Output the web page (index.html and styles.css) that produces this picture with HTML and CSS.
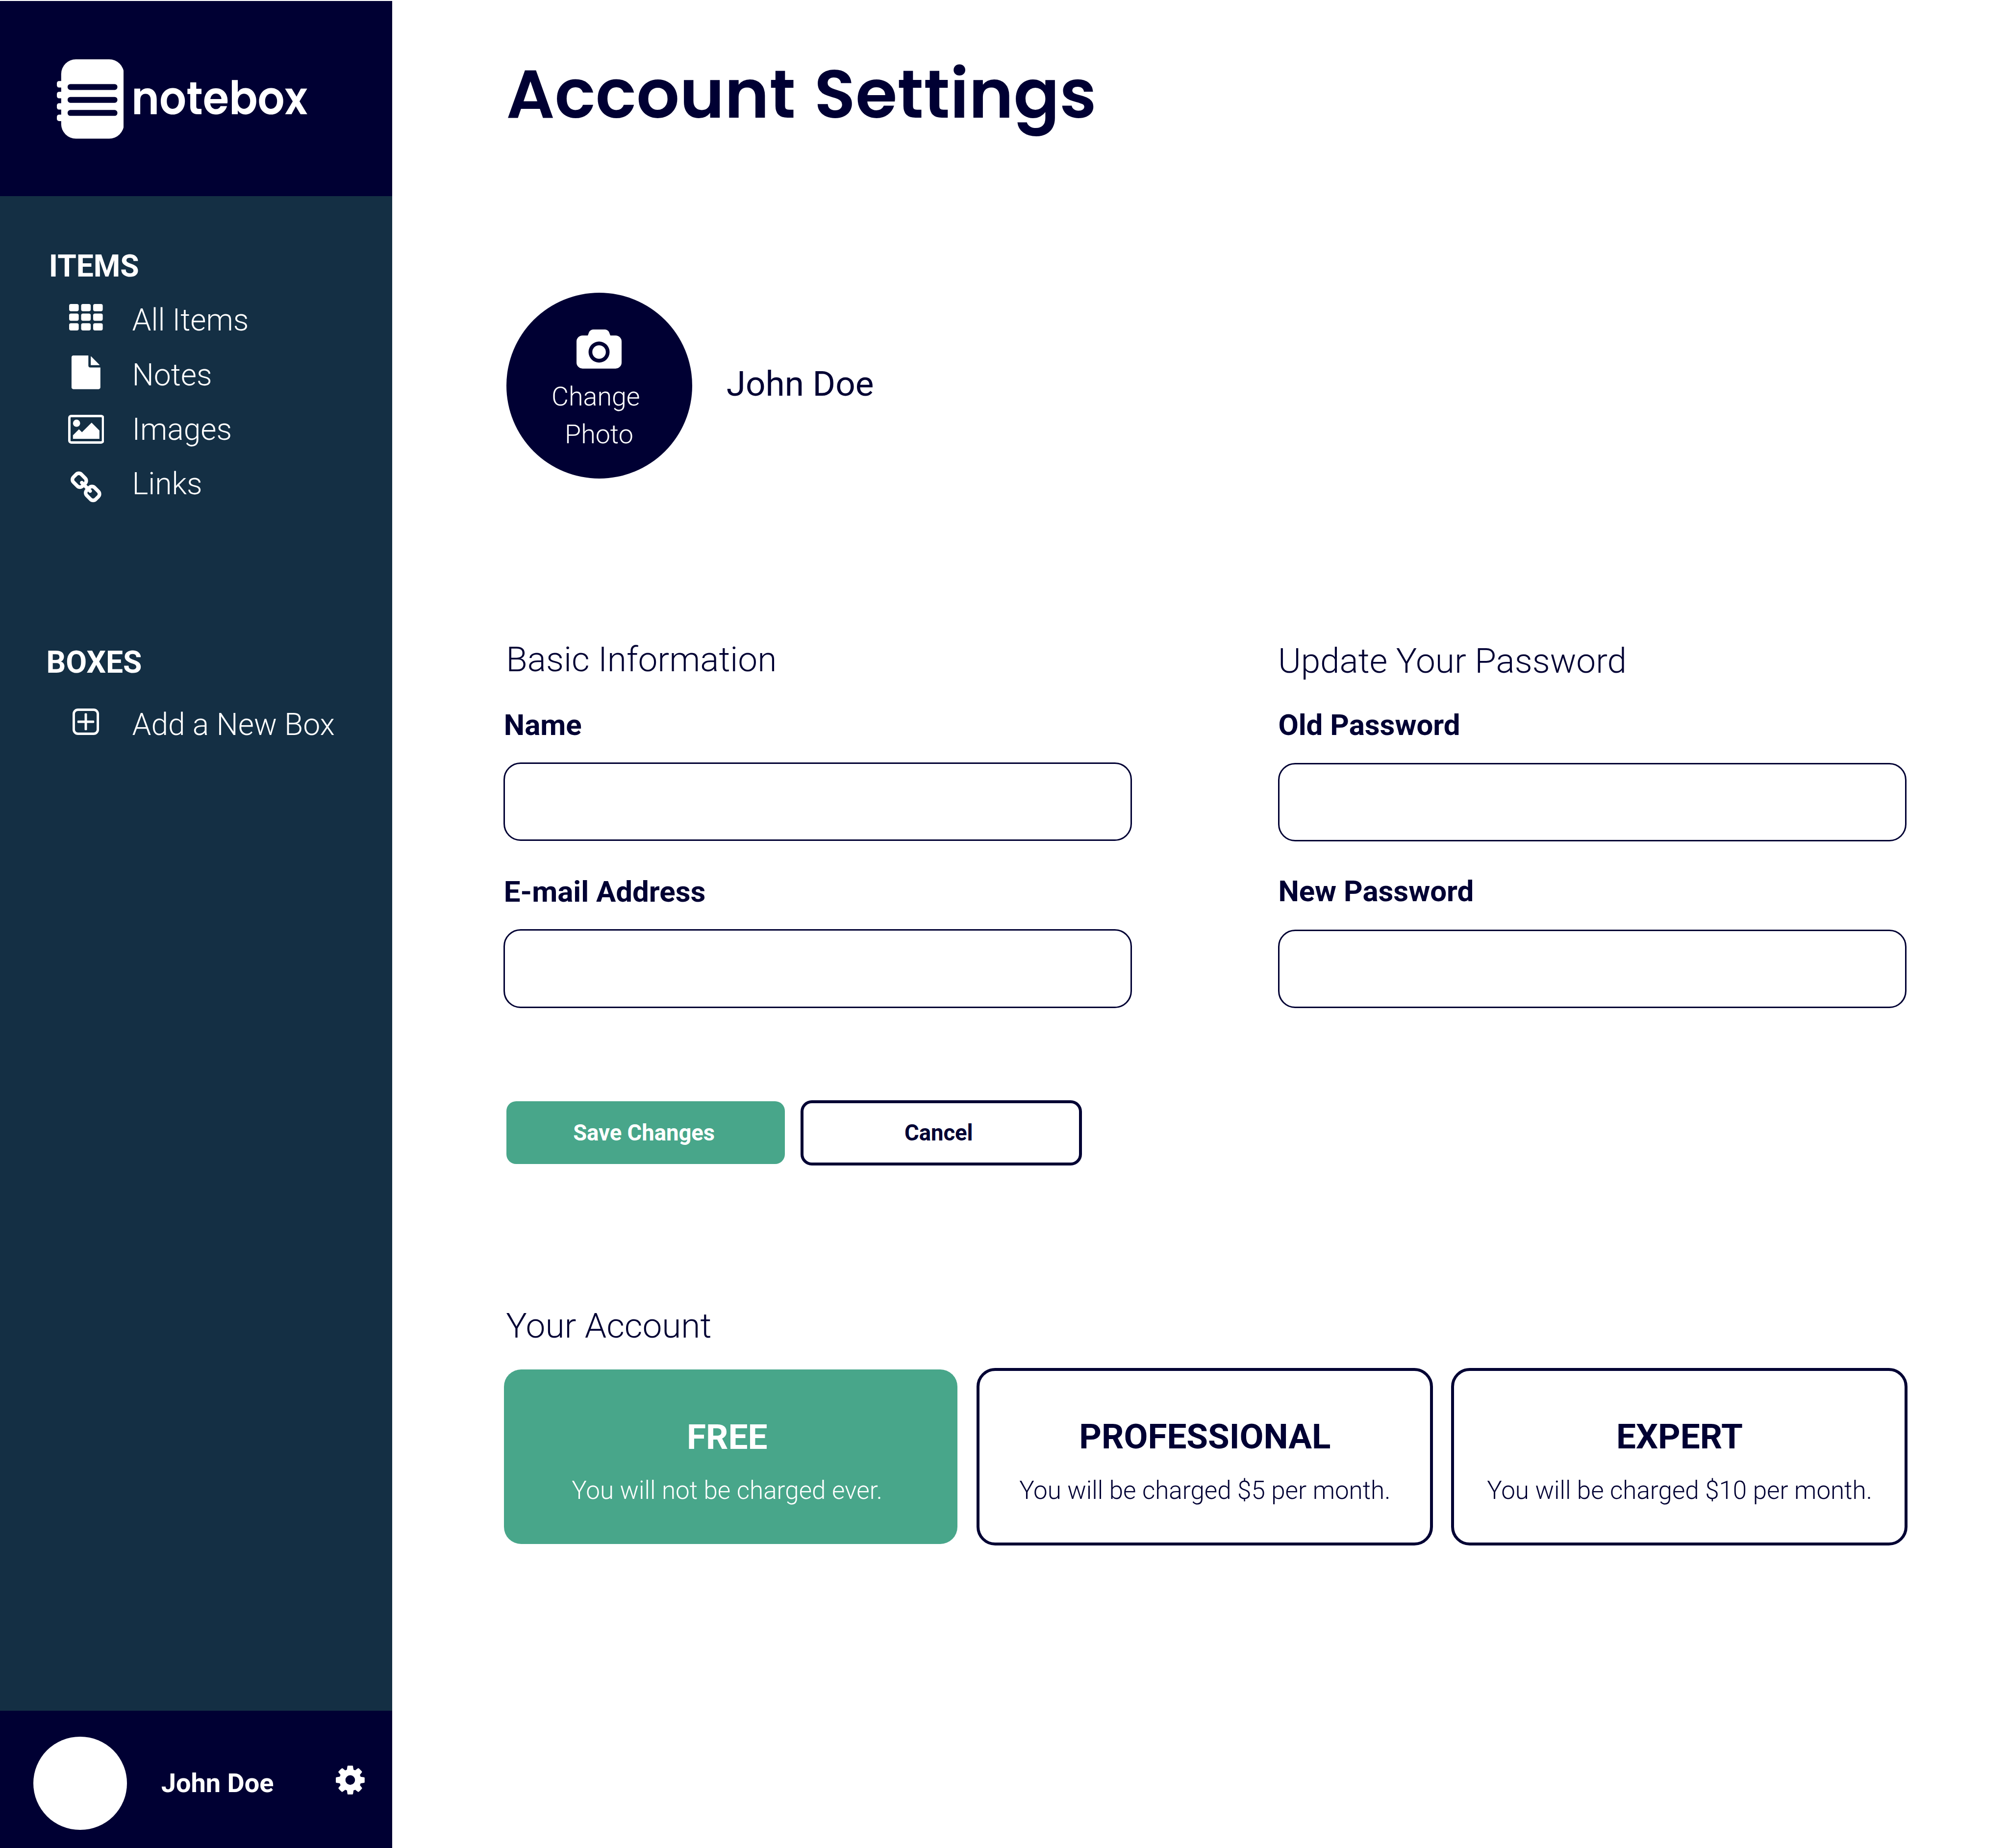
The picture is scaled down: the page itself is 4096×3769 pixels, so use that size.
FILE: index.html
```
<!DOCTYPE html>
<html lang="en">
<head>
<meta charset="utf-8">
<title>Notebox – Account Settings</title>
<link rel="stylesheet" href="styles.css">
</head>
<body>
<div class="app">
  <aside class="sidebar">
    <header class="brand">
      <svg class="brand-mark" viewBox="115.5 120.9 136.8 161.8" aria-hidden="true">
        <g fill="#fff">
          <rect x="124.3" y="120.9" width="128" height="161.8" rx="30"/>
          <rect x="115.5" y="165.2" width="18" height="13.2" rx="4.5"/>
          <rect x="115.5" y="187.2" width="18" height="13.2" rx="4.5"/>
          <rect x="115.5" y="210.3" width="18" height="13.2" rx="4.5"/>
          <rect x="115.5" y="233.6" width="18" height="13.2" rx="4.5"/>
        </g>
        <g fill="#000033">
          <rect x="137.4" y="171.3" width="101.6" height="12" rx="5.6"/>
          <rect x="137.4" y="197.6" width="101.6" height="12" rx="5.6"/>
          <rect x="137.4" y="224.2" width="101.6" height="12" rx="5.6"/>
        </g>
      </svg>
      <span class="brand-name">notebox</span>
    </header>

    <nav class="nav">
      <h2 class="nav-title">ITEMS</h2>
      <ul class="nav-list">
        <li class="nav-item">
          <span class="nav-icon nav-icon-grid"><svg width="68.6" height="53.9" viewBox="0 0 1792 1408"><g fill="#fff">
            <rect x="0" y="0" width="512" height="384" rx="96"/><rect x="640" y="0" width="512" height="384" rx="96"/><rect x="1280" y="0" width="512" height="384" rx="96"/>
            <rect x="0" y="512" width="512" height="384" rx="96"/><rect x="640" y="512" width="512" height="384" rx="96"/><rect x="1280" y="512" width="512" height="384" rx="96"/>
            <rect x="0" y="1024" width="512" height="384" rx="96"/><rect x="640" y="1024" width="512" height="384" rx="96"/><rect x="1280" y="1024" width="512" height="384" rx="96"/>
          </g></svg></span>
          <span>All Items</span>
        </li>
        <li class="nav-item">
          <span class="nav-icon nav-icon-file"><svg width="68.7" height="68.7" viewBox="0 0 1792 1792"><path fill="#fff" d="M1152 512v-472q22 14 36 28l408 408q14 14 28 36h-472zm-128 32q0 40 28 68t68 28h544v1056q0 40-28 68t-68 28h-1344q-40 0-68-28t-28-68v-1600q0-40 28-68t68-28h800v544z"/></svg></span>
          <span>Notes</span>
        </li>
        <li class="nav-item">
          <span class="nav-icon nav-icon-image"><svg width="73.6" height="58.9" viewBox="-64 128 1920 1536"><path fill="#fff" d="M576 576q0 80-56 136t-136 56-136-56-56-136 56-136 136-56 136 56 56 136zm1024 384v448h-1408v-192l320-320 160 160 512-512zm96-704h-1600q-13 0-22.5 9.5t-9.5 22.5v1216q0 13 9.5 22.5t22.5 9.5h1600q13 0 22.5-9.5t9.5-22.5v-1216q0-13-9.5-22.5t-22.5-9.5zm160 32v1216q0 66-47 113t-113 47h-1600q-66 0-113-47t-47-113v-1216q0-66 47-113t113-47h1600q66 0 113 47t47 113z"/></svg></span>
          <span>Images</span>
        </li>
        <li class="nav-item">
          <span class="nav-icon nav-icon-link"><svg width="68.7" height="68.7" viewBox="0 0 1792 1792"><path fill="#fff" d="M1520 1216q0-40-28-68l-208-208q-28-28-68-28-42 0-72 32 3 3 19 18.5t21.5 21.5 15 19 13 25.5 3.5 27.5q0 40-28 68t-68 28q-15 0-27.5-3.5t-25.5-13-19-15-21.5-21.5-18.5-19q-33 31-33 73 0 40 28 68l206 207q27 27 68 27 40 0 68-26l147-146q28-28 28-67zm-703-705q0-40-28-68l-206-207q-28-28-68-28-39 0-68 27l-147 146q-28 28-28 67 0 40 28 68l208 208q27 27 68 27 42 0 72-31-3-3-19-18.5t-21.5-21.5-15-19-13-25.5-3.5-27.5q0-40 28-68t68-28q15 0 27.5 3.5t25.5 13 19 15 21.5 21.5 18.5 19q33-31 33-73zm895 705q0 120-85 203l-147 146q-83 83-203 83-121 0-204-85l-206-207q-83-83-83-203 0-123 88-209l-88-88q-86 88-208 88-120 0-204-84l-208-208q-84-84-84-204t85-203l147-146q83-83 203-83 121 0 204 85l206 207q83 83 83 203 0 123-88 209l88 88q86-88 208-88 120 0 204 84l208 208q84 84 84 204z"/></svg></span>
          <span>Links</span>
        </li>
      </ul>

      <h2 class="nav-title nav-title-boxes">BOXES</h2>
      <ul class="nav-list nav-list-boxes">
        <li class="nav-item">
          <span class="nav-icon nav-icon-add"><svg width="54" height="54" viewBox="192 128 1408 1408"><path fill="#fff" d="M1344 800v64q0 14-9 23t-23 9h-352v352q0 14-9 23t-23 9h-64q-14 0-23-9t-9-23v-352h-352q-14 0-23-9t-9-23v-64q0-14 9-23t23-9h352v-352q0-14 9-23t23-9h64q14 0 23 9t9 23v352h352q14 0 23 9t9 23zm128 448v-832q0-66-47-113t-113-47h-832q-66 0-113 47t-47 113v832q0 66 47 113t113 47h832q66 0 113-47t47-113zm128-832v832q0 119-84.5 203.5t-203.5 84.5h-832q-119 0-203.5-84.5t-84.5-203.5v-832q0-119 84.5-203.5t203.5-84.5h832q119 0 203.5 84.5t84.5 203.5z"/></svg></span>
          <span>Add a New Box</span>
        </li>
      </ul>
    </nav>

    <footer class="user">
      <span class="user-avatar"></span>
      <span class="user-name">John Doe</span>
      <svg class="user-cog" viewBox="128 128 1536 1536"><path fill="#fff" d="M1152 896q0-106-75-181t-181-75-181 75-75 181 75 181 181 75 181-75 75-181zm512-109v222q0 12-8 23t-20 13l-185 28q-19 54-39 91 35 50 107 138 10 12 10 25t-9 23q-27 37-99 108t-94 71q-12 0-26-9l-138-108q-44 23-91 38-16 136-29 186-7 28-36 28h-222q-14 0-24.5-8.5t-11.5-21.5l-28-184q-49-16-90-37l-141 107q-10 9-25 9-14 0-25-11-126-114-165-168-7-10-7-23 0-12 8-23 15-21 51-66.5t54-70.5q-27-50-41-99l-183-27q-13-2-21-12.5t-8-23.5v-222q0-12 8-23t19-13l186-28q14-46 39-92-40-57-107-138-10-12-10-24 0-10 9-23 26-36 98.5-107.5t94.5-71.5q13 0 26 10l138 107q44-23 91-38 16-136 29-186 7-28 36-28h222q14 0 24.5 8.5t11.5 21.5l28 184q49 16 90 37l142-107q9-9 24-9 13 0 25 10 129 119 165 170 7 8 7 22 0 12-8 23-15 21-51 66.5t-54 70.5q26 50 41 98l183 28q13 2 21 12.5t8 23.5z"/></svg>
    </footer>
  </aside>

  <main class="main">
    <h1 class="page-title">Account Settings</h1>

    <section class="profile">
      <button class="photo" type="button">
        <svg class="photo-icon" viewBox="0 0 1920 1664">
          <path fill="#fff" fill-rule="evenodd" d="M1664 256q106 0 181 75t75 181v896q0 106-75 181t-181 75h-1408q-106 0-181-75t-75-181v-896q0-106 75-181t181-75h224l51-136q19-49 69.500-84.500t103.500-35.500h512q53 0 103.500 35.500t69.500 84.500l51 136zM960 1408a448 448 0 1 0 0-896a448 448 0 0 0 0 896z"/>
          <circle cx="960" cy="960" r="288" fill="#fff"/>
        </svg>
        <span class="photo-label">Change&nbsp;<br>Photo</span>
      </button>
      <span class="profile-name">John Doe</span>
    </section>

    <form class="settings">
      <div class="columns">
        <section class="column column-info">
          <h2 class="section-title">Basic Information</h2>
          <label class="label" for="name">Name</label>
          <input class="input" id="name" type="text">
          <label class="label" for="email">E-mail Address</label>
          <input class="input" id="email" type="email">
        </section>
        <section class="column column-password">
          <h2 class="section-title">Update Your Password</h2>
          <label class="label" for="old">Old Password</label>
          <input class="input" id="old" type="password">
          <label class="label" for="new">New Password</label>
          <input class="input" id="new" type="password">
        </section>
      </div>
      <div class="actions">
        <button class="button button-save" type="button">Save Changes</button>
        <button class="button button-cancel" type="button">Cancel</button>
      </div>
    </form>

    <section class="account">
      <h2 class="section-title">Your Account</h2>
      <div class="plans">
        <article class="plan plan-active">
          <h3 class="plan-name">FREE</h3>
          <p class="plan-note">You will not be charged ever.</p>
        </article>
        <article class="plan">
          <h3 class="plan-name">PROFESSIONAL</h3>
          <p class="plan-note">You will be charged $5 per month.</p>
        </article>
        <article class="plan plan-last">
          <h3 class="plan-name">EXPERT</h3>
          <p class="plan-note">You will be charged $10 per month.</p>
        </article>
      </div>
    </section>
  </main>
</div>
</body>
</html>
```
FILE: styles.css
```
* { box-sizing: border-box; }

body {
  margin: 0;
  background: #fff;
  color: #000033;
  font-family: Roboto, sans-serif;
}

h1, h2, h3, p, ul { margin: 0; padding: 0; }
ul { list-style: none; }
svg { display: block; flex: none; }

.app {
  display: flex;
  width: 4096px;
  height: 3769px;
  overflow: hidden;
}

/* Sidebar */

.sidebar {
  display: flex;
  flex-direction: column;
  flex: none;
  width: 800px;
  padding-top: 2px;
  color: #fff;
}

.brand {
  display: flex;
  flex: none;
  align-items: flex-start;
  gap: 16.2px;
  height: 398px;
  padding: 118.9px 0 0 115.5px;
  background: #000033;
}

.brand-mark { width: 136.8px; height: 161.8px; }

/* The wordmark is set slightly condensed */
.brand-name {
  margin-top: 23px;
  font: 600 94.5px/112px Poppins, Inter, sans-serif;
  transform: scaleX(0.914);
  transform-origin: left;
}

.nav {
  flex: 1;
  padding: 106.4px 0 0 99.8px;
  background: #142f44;
}

.nav-title {
  font-size: 62.3px;
  font-weight: 700;
  line-height: 74px;
}

.nav-title-boxes { margin: 271.4px 0 0 -5.4px; }

.nav-list { padding: 17px 0 0 38.7px; }
.nav-list-boxes { padding-top: 34.4px; }

.nav-item {
  display: flex;
  align-items: center;
  gap: 57px;
  height: 111.2px;
  font-size: 62.3px;
  font-weight: 300;
  line-height: 111.2px;
}

.nav-icon {
  display: flex;
  flex: none;
  justify-content: center;
  width: 74px;
}

.nav-icon-grid { margin-bottom: 11.2px; }
.nav-icon-file { margin-bottom: 9.6px; }
.nav-icon-image { margin-top: 1px; }
.nav-icon-link { margin-top: 17.4px; }
.nav-icon-add { margin-bottom: 11.2px; }

.user {
  display: flex;
  flex: none;
  align-items: center;
  height: 280px;
  padding: 16px 56px 0 68.4px;
  background: #000033;
}

.user-avatar {
  flex: none;
  width: 190.4px;
  height: 190.4px;
  border-radius: 50%;
  background: #fff;
}

.user-name {
  margin-left: 70px;
  font-size: 54.1px;
  font-weight: 700;
  line-height: 64px;
}

.user-cog {
  width: 58.8px;
  height: 58.8px;
  margin: 0 0 12.8px auto;
}

/* Main content */

.main {
  flex: 1;
  padding: 109px 205px 0 227px;
}

.page-title {
  margin-left: 5.6px;
  font: 600 138.3px/166px Poppins, Inter, sans-serif;
  word-spacing: 5px;
}

.profile {
  display: flex;
  align-items: center;
  gap: 70px;
  margin: 322px 0 0 5.6px;
}

.photo {
  display: flex;
  flex: none;
  flex-direction: column;
  align-items: center;
  width: 379.2px;
  height: 379.2px;
  padding: 75px 0 0;
  border: 0;
  border-radius: 50%;
  background: #000033;
  color: #fff;
  justify-content: flex-start;
}

.photo-icon { width: 92px; height: 79.7px; }

.photo-label {
  margin-top: 19.4px;
  padding-right: 0.5px;
  font: 300 53.8px/76.9px Roboto, sans-serif;
  text-align: center;
}

.profile-name {
  margin-bottom: 8px;
  font-size: 71.1px;
  line-height: 84px;
}

.section-title {
  padding-left: 5.2px;
  font-size: 71.1px;
  font-weight: 300;
  line-height: 84px;
}

.columns {
  display: grid;
  grid-template-columns: 1282.4px 1282.4px;
  column-gap: 297.2px;
  margin-top: 327.1px;
}

.column { display: flex; flex-direction: column; }

.label {
  padding-left: 0.8px;
  font-size: 60px;
  font-weight: 700;
  line-height: 70px;
}

.input {
  height: 160.4px;
  border: 3px solid #000033;
  border-radius: 35px;
  background: #fff;
  padding: 0 40px;
  font: 400 60px Roboto, sans-serif;
}

.column-info .label { margin-top: 69.5px; }
.column-info .section-title + .label { margin-top: 56.6px; }
.column-info .input { margin-top: 40.7px; }

.column-password .section-title { padding: 2.6px 0 0 0.3px; }
.column-password .section-title + .label { margin-top: 54px; }
.column-password .label { margin-top: 67.2px; }
.column-password .input { margin-top: 42.8px; }
.column-password .label + #old { margin-top: 41.7px; }

.actions {
  display: flex;
  align-items: center;
  gap: 31.4px;
  margin: 187.3px 0 0 6.2px;
}

.button {
  border: 0;
  border-radius: 20px;
  font: 700 45.4px/54px Roboto, sans-serif;
}

.button-save {
  width: 568px;
  height: 127.4px;
  padding: 2px 7px 0 0;
  background: #48a68a;
  color: #fff;
}

.button-cancel {
  width: 574.4px;
  height: 133px;
  padding: 2px 10px 0 0;
  border: 6px solid #000033;
  border-radius: 23px;
  background: #fff;
  color: #000033;
}

.account { margin-top: 285.4px; }

.plans {
  display: flex;
  align-items: center;
  margin-top: 43.6px;
}

.plan {
  flex: none;
  width: 930.6px;
  height: 362px;
  margin-left: 39.2px;
  padding-top: 92.8px;
  border: 6px solid #000033;
  border-radius: 38px;
  text-align: center;
}

.plan-last { margin-left: 37.4px; padding-left: 0.6px; }

.plan-active {
  width: 925.6px;
  height: 356px;
  margin-left: 0.7px;
  padding: 96px 14.6px 0 0;
  border: 0;
  border-radius: 35px;
  background: #48a68a;
  color: #fff;
}

.plan-name {
  font-size: 71px;
  font-weight: 700;
  line-height: 84px;
}

.plan-note {
  margin-top: 36.2px;
  font-size: 51.1px;
  font-weight: 300;
  line-height: 62px;
}
```
